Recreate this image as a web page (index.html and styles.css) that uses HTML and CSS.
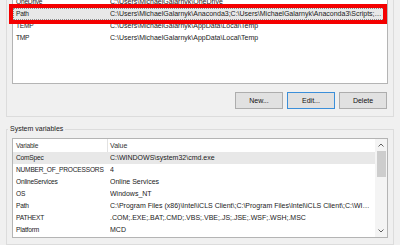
FILE: index.html
```html
<!DOCTYPE html>
<html lang="en">
<head>
  <meta charset="UTF-8" />
  <meta name="viewport" content="width=device-width, initial-scale=1.0" />
  <title>Environment Variables</title>
  <link rel="stylesheet" href="styles.css">
</head>
<body>
  <div class="group user-group">
    <div class="listbox user-list">
      <div class="rows">
        <div class="row"><span class="name">OneDrive</span><span class="value">C:\Users\MichaelGalarnyk\OneDrive</span></div>
        <div class="row selected"><span class="name">Path</span><span class="value">C:\Users\MichaelGalarnyk\Anaconda3;C:\Users\MichaelGalarnyk\Anaconda3\Scripts;C:\Users\MichaelGalarnyk\Anaconda3\Library\bin</span></div>
        <div class="row"><span class="name">TEMP</span><span class="value">C:\Users\MichaelGalarnyk\AppData\Local\Temp</span></div>
        <div class="row"><span class="name">TMP</span><span class="value">C:\Users\MichaelGalarnyk\AppData\Local\Temp</span></div>
      </div>
    </div>
    <div class="buttons">
      <button>New...</button>
      <button class="default">Edit...</button>
      <button>Delete</button>
    </div>
  </div>

  <fieldset class="group system-group">
    <legend>System variables</legend>
    <div class="listbox system-list">
      <div class="rows">
        <div class="row header"><span class="name">Variable</span><span class="value">Value</span></div>
        <div class="row selected"><span class="name">ComSpec</span><span class="value">C:\WINDOWS\system32\cmd.exe</span></div>
        <div class="row"><span class="name">NUMBER_OF_PROCESSORS</span><span class="value">4</span></div>
        <div class="row"><span class="name">OnlineServices</span><span class="value">Online Services</span></div>
        <div class="row"><span class="name">OS</span><span class="value">Windows_NT</span></div>
        <div class="row"><span class="name">Path</span><span class="value">C:\Program Files (x86)\Intel\iCLS Client\;C:\Program Files\Intel\iCLS Client\;C:\WINDOWS\system32;C:\WINDOWS</span></div>
        <div class="row"><span class="name">PATHEXT</span><span class="value">.COM;.EXE;.BAT;.CMD;.VBS;.VBE;.JS;.JSE;.WSF;.WSH;.MSC</span></div>
        <div class="row"><span class="name">Platform</span><span class="value">MCD</span></div>
      </div>
      <div class="scrollbar">
        <div class="arrow">
          <svg width="6" height="4" viewBox="0 0 6 4"><polyline points="0.5,3.5 3,1 5.5,3.5" fill="none" stroke="#606060" stroke-width="1"/></svg>
        </div>
        <div class="thumb"></div>
        <div class="track"></div>
        <div class="arrow">
          <svg width="6" height="4" viewBox="0 0 6 4"><polyline points="0.5,0.5 3,3 5.5,0.5" fill="none" stroke="#606060" stroke-width="1"/></svg>
        </div>
      </div>
    </div>
  </fieldset>

  <div class="callout"></div>
</body>
</html>
```

FILE: styles.css
```css
body {
  margin: 0;
  width: 400px;
  height: 245px;
  overflow: hidden;
  background: #f0f0f0;
  font-family: "Liberation Sans", Arial, sans-serif;
  font-size: 7px;
  color: #1a1a1a;
}
.group {
  box-sizing: border-box;
  width: 388px;
  min-width: 0;
  margin: 0 0 0 6px;
  border: 1px solid #dcdcdc;
}
.user-group {
  border-top: none;
  padding: 0 5px 7px 5px;
}
.listbox {
  box-sizing: border-box;
  background: white;
  border: 1px solid #b4b4b4;
  overflow: hidden;
}
.user-list {
  border-top: none;
  height: 84px;
}
.user-list .rows {
  margin-top: -4px;
}
.row {
  display: flex;
  height: 12px;
  line-height: 12px;
  white-space: nowrap;
}
.row .name {
  box-sizing: border-box;
  width: 97px;
  padding-left: 3px;
  flex-shrink: 0;
  overflow: hidden;
  font-size: 6.6px;
  letter-spacing: -0.2px;
}
.row .value {
  flex: 1;
  min-width: 0;
  padding-right: 4px;
  overflow: hidden;
  text-overflow: ellipsis;
}
.row.selected {
  background: #e8e8e8;
}
.user-list .row.selected {
  outline: 1px dotted #8a8a8a;
  outline-offset: -1px;
}
.buttons {
  display: flex;
  justify-content: flex-end;
  gap: 4px;
  margin-top: 8px;
  padding-right: 1px;
}
button {
  box-sizing: border-box;
  width: 48px;
  height: 17px;
  padding: 0;
  background: #e1e1e1;
  border: 1px solid #adadad;
  font-family: inherit;
  font-size: 7px;
  color: #111;
}
button.default {
  border-color: #3c8fd9;
}
.system-group {
  margin-top: 7px;
  padding: 4px 5px 0 5px;
  height: 121px;
}
.system-group legend {
  margin-left: -4px;
  padding: 0 2px;
  line-height: 10px;
  color: #1a1a1a;
}
.system-list {
  display: flex;
  height: 100px;
}
.system-list .rows {
  flex: 1;
  min-width: 0;
}
.row.header {
  height: 13px;
  line-height: 13px;
  color: #333;
}
.row.header .name {
  width: 95px;
  border-right: 1px solid #e2e2e2;
}
.row.header .value {
  padding-left: 2px;
}
.scrollbar {
  width: 12px;
  flex-shrink: 0;
  display: flex;
  flex-direction: column;
  background: #f4f4f4;
}
.scrollbar .arrow {
  height: 12px;
  display: flex;
  align-items: center;
  justify-content: center;
}
.scrollbar .thumb {
  height: 26px;
  margin: 0 1px 0 2px;
  background: #cdcdcd;
}
.scrollbar .track {
  flex: 1;
}
.callout {
  position: absolute;
  left: 9px;
  top: 4px;
  width: 378px;
  height: 20px;
  box-sizing: border-box;
  border: 4px solid #f40000;
}
```
